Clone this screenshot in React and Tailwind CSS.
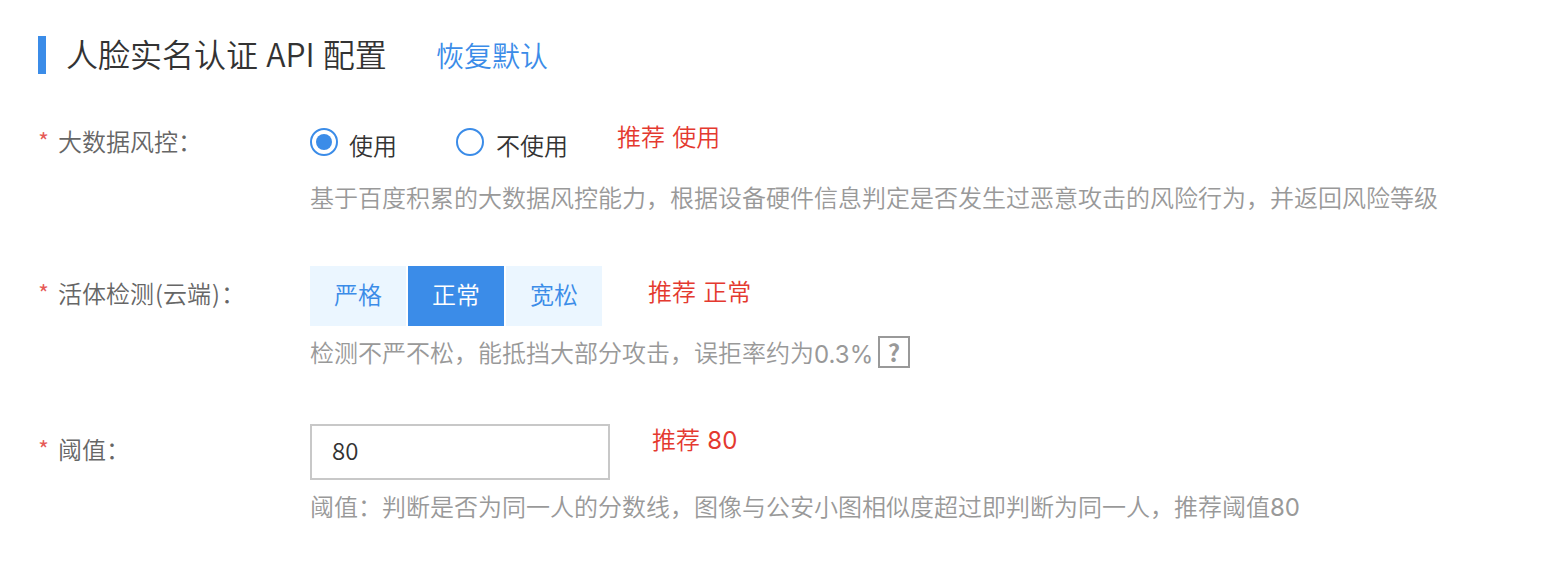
import { useState } from "react";

const LEVELS = ["严格", "正常", "宽松"];

function Row({ label, labelClass, className, children }) {
  return (
    <div className={`flex items-start ${className}`}>
      <div className={`flex w-[272px] shrink-0 leading-9 text-[#666] ${labelClass}`}>
        <span className="w-5 text-[#e65a55]">*</span>
        <span>{label}</span>
      </div>
      <div>{children}</div>
    </div>
  );
}

function Radio({ checked, onClick, children, className }) {
  return (
    <button
      type="button"
      role="radio"
      aria-checked={checked}
      onClick={onClick}
      className={`flex items-start text-[#333] ${className}`}
    >
      <span className="flex size-7 items-center justify-center rounded-full border-2 border-[#3b8ce8]">
        {checked && <span className="size-4 rounded-full bg-[#3b8ce8]" />}
      </span>
      <span className="-mt-px leading-9">{children}</span>
    </button>
  );
}

const Tip = ({ className, children }) => (
  <span className={`leading-9 text-[#e4392f] [word-spacing:2px] ${className}`}>{children}</span>
);

const Hint = ({ className, children }) => (
  <div className={`flex h-9 items-center leading-9 whitespace-nowrap text-[#999] ${className}`}>{children}</div>
);

const Num = ({ children }) => <span className="font-['Inter'] font-normal">{children}</span>;

export default function App() {
  const [used, setUsed] = useState(true);
  const [level, setLevel] = useState("正常");
  const [threshold, setThreshold] = useState("80");

  return (
    <div className="h-[572px] w-[1546px] overflow-hidden bg-white pt-9 pl-[38px] font-['Noto_Sans_CJK_SC',sans-serif] text-2xl font-[350]">
      <div className="flex h-[38px] items-start">
        <span className="h-full w-2 bg-[#3b8ce8]" />
        <h1 className="-mt-0.5 ml-5 w-[370px] text-[32px] leading-[38px] text-[#333] [word-spacing:1px]">
          人脸实名认证 API 配置
        </h1>
        <a className="text-[28px] leading-[38px] text-[#3b8ce8]">恢复默认</a>
      </div>

      <Row label="大数据风控：" className="mt-[46px] h-[146px]" labelClass="pt-[3px]">
        <div className="flex h-[59px]" role="radiogroup">
          <Radio checked={used} onClick={() => setUsed(true)} className="w-[146px] gap-[11px] pt-2">
            使用
          </Radio>
          <Radio checked={!used} onClick={() => setUsed(false)} className="w-[161px] gap-3 pt-2">
            不使用
          </Radio>
          <Tip className="-mt-0.5">推荐 使用</Tip>
        </div>
        <Hint>基于百度积累的大数据风控能力，根据设备硬件信息判定是否发生过恶意攻击的风险行为，并返回风险等级</Hint>
      </Row>

      <Row
        label={
          <>
            活体检测<span className="ml-px">(</span>云端<span className="mx-px">)</span>：
          </>
        }
        className="h-[158px]"
        labelClass="pt-[9px]"
      >
        <div className="flex gap-0.5">
          {LEVELS.map((item) => (
            <button
              key={item}
              type="button"
              onClick={() => setLevel(item)}
              className={`h-[60px] w-24 pb-1 ${item === level ? "bg-[#3b8ce8] text-white" : "bg-[#ebf6ff] text-[#3b8ce8]"}`}
            >
              {item}
            </button>
          ))}
          <Tip className="ml-11 pt-[7px]">推荐 正常</Tip>
        </div>
        <Hint className="mt-2">
          检测不严不松，能抵挡大部分攻击，误拒率约为
          <span className="w-[58px] pt-[3px]">
            <Num>0.3%</Num>
          </span>
          <span className="ml-1.5 flex size-8 items-center justify-center border-2 border-[#999] leading-none font-bold">
            ?
          </span>
        </Hint>
      </Row>

      <Row label="阈值：" labelClass="pt-[7px]">
        <div className="flex">
          <input
            value={threshold}
            onChange={(e) => setThreshold(e.target.value)}
            className="h-14 w-[300px] border-2 border-[#c8c8c8] px-5 pb-1.5 text-[#333] outline-none"
          />
          <Tip className="-mt-[3px] ml-[42px]">
            推荐 <Num>80</Num>
          </Tip>
        </div>
        <Hint className="mt-2">
          阈值：判断是否为同一人的分数线，图像与公安小图相似度超过即判断为同一人，推荐阈值
          <span className="pt-0.5">
            <Num>80</Num>
          </span>
        </Hint>
      </Row>
    </div>
  );
}
